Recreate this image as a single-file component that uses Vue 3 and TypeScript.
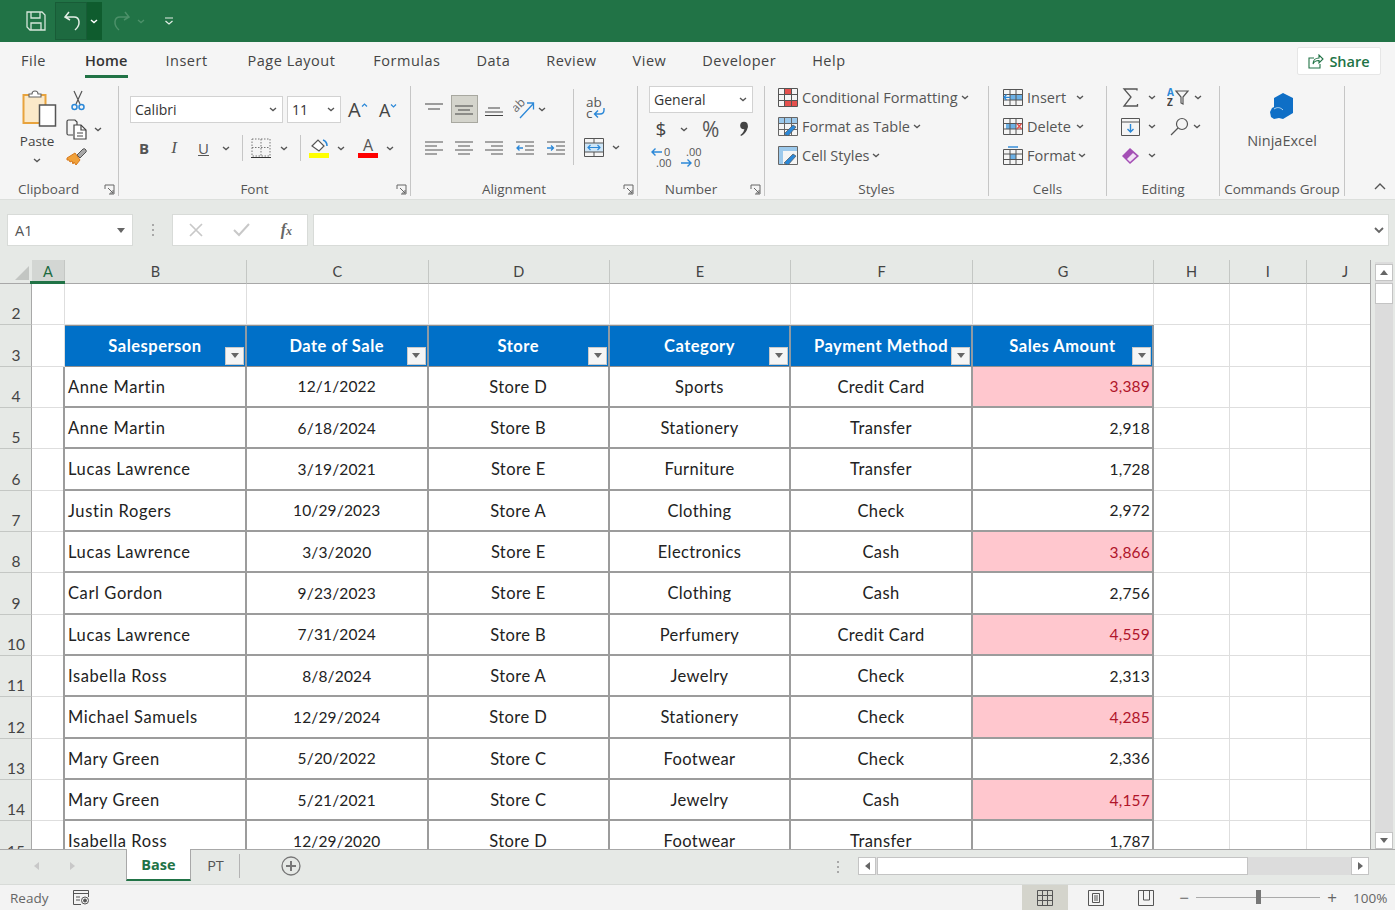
<script setup lang="ts">
import { h } from 'vue'

interface Row { num: number; name: string; date: string; store: string; cat: string; pay: string; amt: string; hot: boolean }

const Chev = () =>
  h('svg', { class: 'chev', viewBox: '0 0 8 5', width: 8, height: 5 }, [
    h('path', { d: 'M1 1l3 2.6L7 1', fill: 'none', stroke: '#555', 'stroke-width': 1.3 })
  ])
const Launcher = () =>
  h('svg', { class: 'launcher', viewBox: '0 0 11 11', width: 11, height: 11 }, [
    h('path', { d: 'M1 5V1h9v9H5M4 4l5 5M9 6v3H6', fill: 'none', stroke: '#666', 'stroke-width': 1 })
  ])

const tabs = ['File', 'Home', 'Insert', 'Page Layout', 'Formulas', 'Data', 'Review', 'View', 'Developer', 'Help']
const columns = [
  { l: 'A', c: 'sel' }, { l: 'B', c: '' }, { l: 'C', c: '' }, { l: 'D', c: '' }, { l: 'E', c: '' },
  { l: 'F', c: '' }, { l: 'G', c: '' }, { l: 'H', c: '' }, { l: 'I', c: '' }, { l: 'J', c: '' }
]
const headers = ['Salesperson', 'Date of Sale', 'Store', 'Category', 'Payment Method', 'Sales Amount']
const rows: Row[] = [
  ['Anne Martin', '12/1/2022', 'Store D', 'Sports', 'Credit Card', '3,389', true],
  ['Anne Martin', '6/18/2024', 'Store B', 'Stationery', 'Transfer', '2,918', false],
  ['Lucas Lawrence', '3/19/2021', 'Store E', 'Furniture', 'Transfer', '1,728', false],
  ['Justin Rogers', '10/29/2023', 'Store A', 'Clothing', 'Check', '2,972', false],
  ['Lucas Lawrence', '3/3/2020', 'Store E', 'Electronics', 'Cash', '3,866', true],
  ['Carl Gordon', '9/23/2023', 'Store E', 'Clothing', 'Cash', '2,756', false],
  ['Lucas Lawrence', '7/31/2024', 'Store B', 'Perfumery', 'Credit Card', '4,559', true],
  ['Isabella Ross', '8/8/2024', 'Store A', 'Jewelry', 'Check', '2,313', false],
  ['Michael Samuels', '12/29/2024', 'Store D', 'Stationery', 'Check', '4,285', true],
  ['Mary Green', '5/20/2022', 'Store C', 'Footwear', 'Check', '2,336', false],
  ['Mary Green', '5/21/2021', 'Store C', 'Jewelry', 'Cash', '4,157', true],
  ['Isabella Ross', '12/29/2020', 'Store D', 'Footwear', 'Transfer', '1,787', false]
].map((r, i) => ({
  num: i + 4, name: r[0] as string, date: r[1] as string, store: r[2] as string, cat: r[3] as string,
  pay: r[4] as string, amt: r[5] as string, hot: r[6] as boolean
}))
</script>

<template>
  <div class="app">
    <header class="titlebar">
      <svg class="qa-save" width="22" height="22" viewBox="0 0 22 22" fill="none" stroke="#d5e6da" stroke-width="1.3">
        <path d="M2 2h15l3 3v15H5l-3-3z" /><path d="M6 2v6h9V2M6 20v-7h10v7" />
      </svg>
      <div class="undo-box">
        <span class="undo-main">
          <svg width="20" height="22" viewBox="0 0 20 22" fill="none" stroke="#e3eee6" stroke-width="1.5">
            <path d="M6 2 2 7l5 3M2 7h9c6 0 7 8 1 13" />
          </svg>
        </span>
        <span class="undo-drop">
          <svg width="8" height="5" viewBox="0 0 8 5"><path d="M1 1l3 2.6L7 1" fill="none" stroke="#fff" stroke-width="1.4" /></svg>
        </span>
      </div>
      <svg class="qa-redo" width="20" height="22" viewBox="0 0 20 22" fill="none" stroke="#4c9069" stroke-width="1.5">
        <path d="M14 2l4 5-5 3M18 7H9c-6 0-7 8-1 13" />
      </svg>
      <svg class="qa-redo-ch" width="8" height="5" viewBox="0 0 8 5"><path d="M1 1l3 2.6L7 1" fill="none" stroke="#4c9069" stroke-width="1.3" /></svg>
      <svg class="qa-more" width="10" height="9" viewBox="0 0 10 9" fill="none" stroke="#e3eee6" stroke-width="1.2">
        <path d="M1 1h8M1.5 4l3.5 3 3.5-3" />
      </svg>
    </header>

    <nav class="tabbar">
      <span v-for="t in tabs" :key="t" class="tab" :class="{ active: t === 'Home', wide: t === 'Page Layout' }">{{ t }}</span>
      <button class="share">
        <svg width="16" height="15" viewBox="0 0 16 15" fill="none" stroke="#217346" stroke-width="1.1">
          <path d="M6 4H1v10h11v-4M5 10c0-4 3-6 6-6V1l4 4-4 4V6.5c-3 0-5 1-6 3.5z" />
        </svg>
        Share
      </button>
    </nav>

    <section class="ribbon">
      <!-- Clipboard -->
      <div class="group g-clip">
        <div class="g-body clip-body">
          <div class="paste">
            <svg class="paste-ic" width="36" height="38" viewBox="0 0 36 38">
              <path d="M1.5 6h22v28h-22z" fill="#fbe9c9" stroke="#e8a33d" stroke-width="2" />
              <path d="M7 8V5h3c0-4 6-4 6 0h3v3z" fill="#fff" stroke="#666" stroke-width="1.1" />
              <path d="M17.5 16h16v21h-16z" fill="#fff" stroke="#555" stroke-width="1.5" />
            </svg>
            <span class="paste-t">Paste</span>
            <Chev />
          </div>
          <div class="clip-col">
            <svg width="14" height="21" viewBox="0 0 14 21" fill="none">
              <path d="M3 1l6 13M11 1 5 14" stroke="#555" stroke-width="1.2" />
              <circle cx="3.5" cy="17" r="2.5" stroke="#2b88d8" stroke-width="1.5" />
              <circle cx="10.5" cy="17" r="2.5" stroke="#2b88d8" stroke-width="1.5" />
            </svg>
            <span class="row-inline">
              <svg width="22" height="21" viewBox="0 0 22 21" fill="none" stroke="#444" stroke-width="1.2">
                <path d="M7 16H2.5Q1 16 1 14.5V2.500Q1 1 2.500 1H9l2 2v3" />
                <path d="M8 6h7l5 5v9H8z" fill="#fff" /><path d="M15 6v5h5M11 14h6M11 17h6" />
              </svg>
              <Chev />
            </span>
            <svg width="21" height="19" viewBox="0 0 21 19">
              <path d="M11 8l6-6q2-1 3 1t-1 3l-5 5z" fill="#a8a8a8" stroke="#555" />
              <path d="M1 11l8-5 5 7-4 5-2-3-1 2-1-3-2 1-1-2-2 0z" fill="#f0a13a" stroke="#d8791a" />
            </svg>
          </div>
        </div>
        <div class="g-label">Clipboard<Launcher /></div>
      </div>

      <!-- Font -->
      <div class="group g-font">
        <div class="g-body col">
          <div class="frow f1">
            <div class="select s-font"><span>Calibri</span><Chev /></div>
            <div class="select s-size"><span>11</span><Chev /></div>
            <span class="grow-a big">A<svg width="7" height="4" viewBox="0 0 7 4"><path d="M1 3.5l2.5-2.5L6 3.5" fill="none" stroke="#2b88d8" stroke-width="1.2" /></svg></span>
            <span class="grow-a small">A<svg width="7" height="4" viewBox="0 0 7 4"><path d="M1 .5l2.5 2.5L6 .5" fill="none" stroke="#2b88d8" stroke-width="1.2" /></svg></span>
          </div>
          <div class="frow f2">
            <span class="fs b">B</span>
            <span class="fs i">I</span>
            <span class="fs u">U</span>
            <span class="fch m4"><Chev /></span>
            <i class="vsep" />
            <span class="fs bd">
              <svg width="20" height="20" viewBox="0 0 20 20" fill="none" stroke="#777" stroke-dasharray="1.5 1.5">
                <path d="M1 1h18v17H1zM10 1v17M1 9.5h18" /><path d="M0 19.5h20" stroke="#333" stroke-dasharray="none" />
              </svg>
            </span>
            <span class="fch m2"><Chev /></span>
            <i class="vsep" />
            <span class="fs fill">
              <svg width="20" height="22" viewBox="0 0 20 22">
                <path d="M3 9l6-6 6 6-5 5z" fill="#fff" stroke="#555" stroke-width="1.2" />
                <path d="M14 3c3 1 4 3 4 6" fill="none" stroke="#2b88d8" stroke-width="1.6" />
                <path d="M0 16h20v5H0z" fill="#ffff00" />
              </svg>
            </span>
            <span class="fch"><Chev /></span>
            <span class="fs color"><b>A</b><i /></span>
            <span class="fch"><Chev /></span>
          </div>
        </div>
        <div class="g-label launch">Font<Launcher /></div>
      </div>

      <!-- Alignment -->
      <div class="group g-align">
        <div class="g-body al-body">
          <div class="al-grid">
            <span class="al"><svg width="18" height="13" viewBox="0 0 18 13" stroke="#444" stroke-width="1.1"><path d="M0 1h18M3 6h12" /></svg></span>
            <span class="al on"><svg width="18" height="13" viewBox="0 0 18 13" stroke="#444" stroke-width="1.1"><path d="M0 3h18M3 7h12M0 11h18" /></svg></span>
            <span class="al"><svg width="18" height="13" viewBox="0 0 18 13" stroke="#444" stroke-width="1.1"><path d="M3 5h12M0 9h18M0 12.5h18" /></svg></span>
            <span class="al orient">
              <svg width="22" height="24" viewBox="0 0 22 24" fill="none">
                <path d="M7 21 20 7M14 6h6.5v6.5" stroke="#2b88d8" stroke-width="1.3" />
                <text x="0" y="0" transform="translate(3 16) rotate(-45)" class="orient-t">ab</text>
              </svg>
              <Chev />
            </span>
          </div>
          <div class="al-grid r2">
            <span class="al"><svg width="18" height="15" viewBox="0 0 18 15" stroke="#555" stroke-width="1.1"><path d="M0 1h18M0 5h12M0 9h18M0 13h12" /></svg></span>
            <span class="al"><svg width="18" height="15" viewBox="0 0 18 15" stroke="#555" stroke-width="1.1"><path d="M0 1h18M3 5h12M0 9h18M3 13h12" /></svg></span>
            <span class="al"><svg width="18" height="15" viewBox="0 0 18 15" stroke="#555" stroke-width="1.1"><path d="M0 1h18M6 5h12M0 9h18M6 13h12" /></svg></span>
            <span class="al nr"><svg width="18" height="15" viewBox="0 0 18 15" fill="none" stroke="#555" stroke-width="1.1"><path d="M0 1h18M9 5h9M9 9h9M0 13h18" /><path d="M7 7H1M3.5 4.5 1 7l2.5 2.5" stroke="#2b88d8" stroke-width="1.3" /></svg></span>
            <span class="al nr"><svg width="18" height="15" viewBox="0 0 18 15" fill="none" stroke="#555" stroke-width="1.1"><path d="M0 1h18M9 5h9M9 9h9M0 13h18" /><path d="M0 7h6M4 4.5 6.5 7 4 9.5" stroke="#2b88d8" stroke-width="1.3" /></svg></span>
          </div>
          <i class="vsep tall" />
          <div class="wrap-col">
            <span class="wrap-ic">
              <span class="abc">ab<br />c</span>
              <svg width="12" height="10" viewBox="0 0 12 10" fill="none" stroke="#2b88d8" stroke-width="1.4"><path d="M11 0v2c0 3-2 4-4 4H2M5 2.5 1.5 6 5 9.5" /></svg>
            </span>
            <span class="merge">
              <svg width="20" height="19" viewBox="0 0 20 19" fill="none">
                <path d="M1 5h18v9H1z" fill="#cfe6f7" />
                <path d="M.5.5h19v18H.5zM.5 5h19M.5 14h19M10 1v4M10 14v4" stroke="#555" />
                <path d="M4 9.5h12M6.5 7 4 9.5 6.5 12M13.5 7 16 9.5 13.5 12" stroke="#2b88d8" stroke-width="1.2" />
              </svg>
              <Chev />
            </span>
          </div>
        </div>
        <div class="g-label launch">Alignment<Launcher /></div>
      </div>

      <!-- Number -->
      <div class="group g-num">
        <div class="g-body col">
          <div class="select s-gen"><span>General</span><Chev /></div>
          <div class="num-r2">
            <span class="dollar">$</span><Chev />
            <span class="pct">%</span>
            <svg class="comma" width="10" height="16" viewBox="0 0 10 16"><circle cx="5" cy="4.5" r="3.8" fill="#444" /><path d="M8.8 4.5C9 9 6 13 2 15l-.6-1C4 12 5.5 9.5 5.5 7z" fill="#444" /></svg>
          </div>
          <div class="num-r3">
            <svg width="26" height="29" viewBox="0 -3 26 29" fill="none">
              <path d="M11 6H1M4.5 2.5 1 6l3.5 3.500" stroke="#2b88d8" stroke-width="1.4" />
              <text x="13" y="10" class="dec">0</text><text x="5" y="21" class="dec">.00</text>
            </svg>
            <svg width="26" height="29" viewBox="0 -3 26 29" fill="none">
              <text x="5" y="10" class="dec">.00</text><text x="13" y="21" class="dec">0</text>
              <path d="M0 17h10M6.5 13.5 10 17l-3.5 3.5" stroke="#2b88d8" stroke-width="1.4" />
            </svg>
          </div>
        </div>
        <div class="g-label launch">Number<Launcher /></div>
      </div>

      <!-- Styles -->
      <div class="group g-styles">
        <div class="g-body stack">
          <div class="cmd">
            <svg width="20" height="19" viewBox="0 0 20 19" fill="none">
              <path d="M.5.5h19v18H.5z" stroke="#555" /><path d="M6 1h8v6H6zM6 12h13v6H6z" fill="#e5504d" />
              <path d="M.5 6.5h19M.5 12.5h19M6.5 1v17M13.5 1v17" stroke="#555" />
            </svg>
            <span>Conditional Formatting</span><Chev />
          </div>
          <div class="cmd">
            <svg width="20" height="19" viewBox="0 0 20 19" fill="none">
              <path d="M1 1h18v5H1z" fill="#9cc9ec" />
              <path d="M.5.5h19v18H.5zM.5 6.5h19M.5 12.5h19M6.5 1v17M13.5 1v17" stroke="#666" />
              <path d="M6 17l9-9 3 2-8 9z" fill="#2b88d8" stroke="#555" stroke-width=".7" />
            </svg>
            <span>Format as Table</span><Chev />
          </div>
          <div class="cmd">
            <svg width="20" height="19" viewBox="0 0 20 19" fill="none">
              <path d="M1 1h18v4H1zM1 5h4v13H1z" fill="#9cc9ec" />
              <path d="M.5.5h19v18H.5z" stroke="#666" />
              <path d="M6 17l9-9 3 2-8 9z" fill="#2b88d8" stroke="#555" stroke-width=".7" />
            </svg>
            <span>Cell Styles</span><Chev />
          </div>
        </div>
        <div class="g-label center">Styles</div>
      </div>

      <!-- Cells -->
      <div class="group g-cells">
        <div class="g-body stack">
          <div class="cmd">
            <svg width="20" height="17" viewBox="0 0 20 17" fill="none">
              <path d="M7 6h12v5H7z" fill="#6cb1e6" />
              <path d="M.5.5h19v16H.5zM.5 5.5h19M.5 11h19M7 1v15M13 1v15" stroke="#555" />
              <path d="M7 8.3H1M3.5 5.5 1 8.3 3.5 11" stroke="#2b88d8" stroke-width="1.3" />
            </svg>
            <span class="c-t">Insert</span><Chev />
          </div>
          <div class="cmd">
            <svg width="20" height="17" viewBox="0 0 20 17" fill="none">
              <path d="M3 6h10v5H3z" fill="#6cb1e6" />
              <path d="M.5.5h19v16H.5zM.5 5.5h19M.5 11h19M7 1v15M13 1v15" stroke="#555" />
              <path d="M14 5.5l4.5 5.5M18.5 5.5 14 11" stroke="#e5504d" stroke-width="1.4" />
            </svg>
            <span class="c-t">Delete</span><Chev />
          </div>
          <div class="cmd">
            <svg width="20" height="19" viewBox="0 0 20 19" fill="none">
              <path d="M7 8h6v5.5H7z" fill="#6cb1e6" />
              <path d="M.5 3.5h19v15H.5zM.5 8h19M.5 13.5h19M7 4v14M13 4v14" stroke="#555" />
              <path d="M5 1h10" stroke="#2b88d8" stroke-width="1.4" />
            </svg>
            <span class="c-t short">Format</span><Chev />
          </div>
        </div>
        <div class="g-label center">Cells</div>
      </div>

      <!-- Editing -->
      <div class="group g-edit">
        <div class="g-body edit-body">
          <div class="erow">
            <svg width="20" height="19" viewBox="0 0 20 19" fill="none" stroke="#555" stroke-width="1.3"><path d="M16 2.5V1H3l7 8-7 9h13.5v-2" /></svg>
            <Chev />
            <svg class="ed-2" width="24" height="27" viewBox="0 -4 24 27" fill="none">
              <text x="0" y="8" class="az a">A</text><text x="0" y="18" class="az">Z</text>
              <path d="M9 3h12l-5 6v7l-2-1V9z" stroke="#555" stroke-width="1.2" />
            </svg>
            <Chev />
          </div>
          <div class="erow">
            <svg width="20" height="18" viewBox="0 0 20 18" fill="none">
              <path d="M.5.5h18v17H.5zM.5 4h18" stroke="#555" />
              <path d="M9.5 6v8M6.5 11l3 3 3-3" stroke="#2b88d8" stroke-width="1.4" />
            </svg>
            <Chev />
            <svg class="ed-2b" width="20" height="19" viewBox="0 0 20 19" fill="none" stroke="#555" stroke-width="1.2">
              <circle cx="12" cy="7" r="5.5" /><path d="M8 11l-7 7" />
            </svg>
            <Chev />
          </div>
          <div class="erow">
            <svg width="20" height="18" viewBox="0 0 20 18">
              <path d="M1 9l8-8 9 8-9 8z" fill="#a44fb5" />
              <path d="M6 12 12 6l3.5 3-6.5 6z" fill="#f2e0f5" />
            </svg>
            <Chev />
          </div>
        </div>
        <div class="g-label center">Editing</div>
      </div>

      <!-- Commands -->
      <div class="group g-cmd">
        <div class="g-body ninja">
          <svg width="24" height="27" viewBox="0 0 24 27">
            <path d="M13 0l10 5v15l-10 6-4-1-5 1-3-2-1-5 2-4 2-1V5z" fill="#0f6fc6" />
            <path d="M4 16c3-2 6-2 9 1" fill="none" stroke="#b7d7f1" stroke-width="1" />
          </svg>
          <span>NinjaExcel</span>
        </div>
        <div class="g-label center">Commands Group</div>
      </div>

      <svg class="collapse" width="12" height="7" viewBox="0 0 12 7"><path d="M1 6l5-5 5 5" fill="none" stroke="#555" stroke-width="1.4" /></svg>
    </section>

    <section class="formula">
      <div class="namebox"><span>A1</span><i class="tri" /></div>
      <span class="dots"><i /><i /><i /></span>
      <div class="fxbox">
        <svg width="14" height="14" viewBox="0 0 14 14"><path d="M1 1l12 12M13 1 1 13" stroke="#c8c8c8" stroke-width="1.7" /></svg>
        <svg width="17" height="14" viewBox="0 0 17 14"><path d="M1 7l5 5L16 1" fill="none" stroke="#c8c8c8" stroke-width="2" /></svg>
        <span class="fx">f<small>x</small></span>
      </div>
      <div class="fbar">
        <svg width="10" height="7" viewBox="0 0 10 7"><path d="M1 1l4 4 4-4" fill="none" stroke="#666" stroke-width="1.8" /></svg>
      </div>
    </section>

    <section class="sheet">
      <div class="gridwrap">
        <div class="grid">
          <div class="ch corner"><i /></div>
          <div v-for="c in columns" :key="c.l" class="ch" :class="c.c">{{ c.l }}</div>

          <div class="rh">2</div>
          <div v-for="c in columns" :key="'r2' + c.l" class="gc" />

          <div class="rh">3</div>
          <div class="gc" />
          <div v-for="hd in headers" :key="hd" class="th">
            <span>{{ hd }}</span>
            <button class="filter"><i /></button>
          </div>
          <div class="gc" /><div class="gc" /><div class="gc" />

          <template v-for="r in rows" :key="r.num">
            <div class="rh">{{ r.num }}</div>
            <div class="gc" />
            <div class="td left">{{ r.name }}</div>
            <div class="td date">{{ r.date }}</div>
            <div class="td">{{ r.store }}</div>
            <div class="td">{{ r.cat }}</div>
            <div class="td">{{ r.pay }}</div>
            <div class="td right" :class="{ hot: r.hot }">{{ r.amt }}</div>
            <div class="gc" /><div class="gc" /><div class="gc" />
          </template>
        </div>
      </div>
      <div class="vscroll">
        <span class="sbtn"><i class="up" /></span>
        <span class="vthumb" />
        <span class="vtrack" />
        <span class="sbtn"><i class="down" /></span>
      </div>
    </section>

    <section class="sheettabs">
      <span class="nav"><i class="l" /></span>
      <span class="nav"><i class="r" /></span>
      <span class="stab active">Base</span>
      <span class="stab">PT</span>
      <svg class="plus" width="20" height="20" viewBox="0 0 20 20" fill="none" stroke="#777"><circle cx="10" cy="10" r="9" stroke-width="1.3" /><path d="M5 10h10M10 5v10" stroke-width="2" /></svg>
      <span class="dots2"><i /><i /><i /></span>
      <div class="hscroll">
        <span class="hbtn"><i class="l" /></span>
        <span class="hthumb" />
        <span class="htrack" />
        <span class="hbtn"><i class="r" /></span>
      </div>
    </section>

    <footer class="status">
      <span class="ready">Ready</span>
      <svg class="macro" width="19" height="17" viewBox="0 0 19 17" fill="none" stroke="#555">
        <path d="M9 15.5H1.5v-14h15V8M1.5 4.5h15M4 8h4M4 11h4" /><circle cx="13" cy="11.5" r="3.5" /><circle cx="13" cy="11.5" r="1.5" fill="#555" />
      </svg>
      <span class="views">
        <span class="view on">
          <svg width="16" height="16" viewBox="0 0 16 16" fill="none" stroke="#555"><path d="M.5.5h15v15H.5zM.5 5.5h15M.5 10.5h15M5.5 1v15M10.5 1v15" /></svg>
        </span>
        <span class="view v2">
          <svg width="16" height="16" viewBox="0 0 16 16" fill="none" stroke="#555"><path d="M.5.5h15v15H.5zM4.5 3.5h7v9h-7zM6 6h4M6 8h4M6 10h4" /></svg>
        </span>
        <span class="view v3">
          <svg width="16" height="16" viewBox="0 0 16 16" fill="none" stroke="#555"><path d="M.5.5h15v15H.5zM5.5 1v9h6V1" /></svg>
        </span>
      </span>
      <span class="zm">−</span>
      <span class="slider"><i /></span>
      <span class="zm plus-z">+</span>
      <span class="pctz">100%</span>
    </footer>
  </div>
</template>

<style>
html, body { margin: 0; background: #e6e9e6; }
</style>

<style scoped>
.app {
  width: 1395px; height: 910px; overflow: hidden; display: flex; flex-direction: column;
  font-family: "Open Sans", "Noto Sans", sans-serif; color: #444; background: #e6e9e6;
}
svg { flex: none; display: block; }
.titlebar { height: 42px; background: #217346; display: flex; align-items: center; padding-left: 25px; flex: none; }
.undo-box { display: flex; height: 38px; margin-left: 8px; }
.undo-main { width: 32px; background: #1d6a40; border: 1px solid #185c37; box-sizing: border-box; display: flex; align-items: center; justify-content: center; padding-left: 3px; }
.undo-drop { width: 15px; background: #0f5c2e; display: flex; align-items: center; justify-content: center; padding-right: 2px; box-sizing: border-box; }
.qa-redo { margin-left: 9px; }
.qa-redo-ch { margin-left: 6px; }
.qa-more { margin-left: 19px; }

.tabbar { height: 38px; background: #f5f5f5; display: flex; align-items: center; padding-left: 21px; flex: none; position: relative; gap: 36px; font-size: 14.5px; letter-spacing: .5px; }
.tab { line-height: 38px; height: 38px; position: relative; color: #444; white-space: nowrap; }
.tab:first-child { margin-right: 3px; }
.tab.active { color: #333; font-weight: 600; letter-spacing: .15px; margin-right: -2px; }
.tab.wide { margin-left: 4px; margin-right: 2px; }
.tab.active { margin-right: 2px; }
.tab.active::after { content: ""; position: absolute; left: 0; right: 0; bottom: 2px; height: 3px; background: #217346; }
.share { margin-left: auto; margin-right: 14px; width: 84px; height: 28px; background: #fff; border: 1px solid #e6e6e6; border-radius: 2px; color: #217346; font: 600 14.5px "Open Sans", sans-serif; letter-spacing: 0; display: flex; align-items: center; justify-content: center; gap: 5px; padding: 0; }

.ribbon { height: 120px; background: #f5f5f5; display: flex; flex: none; position: relative; border-bottom: 1px solid #dcdfdc; box-sizing: border-box; padding-top: 6px; }
.group { display: flex; flex-direction: column; border-right: 1px solid #c6c6c6; box-sizing: border-box; height: 110px; flex: none; }
.g-body { flex: 1; min-height: 0; }
.g-label { height: 13px; font-size: 13.5px; line-height: 13px; color: #555; display: flex; align-items: center; justify-content: center; position: relative; white-space: nowrap; }
.g-label.launch { padding-right: 20px; }
.launcher { position: absolute; right: 3px; top: 1px; }
.chev { flex: none; }
.col { display: flex; flex-direction: column; }

.g-clip { width: 119px; }
.g-font { width: 292px; }
.g-align { width: 227px; }
.g-num { width: 127px; }
.g-styles { width: 224px; }
.g-cells { width: 118px; }
.g-edit { width: 113px; }
.g-cmd { width: 125px; }
.g-clip .g-label { justify-content: flex-start; padding-left: 18px; }

.clip-body { display: flex; padding-left: 18px; }
.paste { width: 38px; display: flex; flex-direction: column; align-items: center; padding-top: 3px; }
.paste-ic { margin-left: 5px; }
.paste-t { font-size: 13.5px; line-height: 18px; margin-top: 5px; margin-bottom: 8px; }
.clip-col { margin-left: 9px; display: flex; flex-direction: column; align-items: flex-start; padding-top: 4px; gap: 8px; }
.clip-col > svg:first-child { margin-left: 6px; }
.row-inline { display: flex; align-items: center; gap: 6px; margin-left: 1px; }
.clip-col > svg:last-child { margin-left: 1px; margin-top: -1px; }

.g-font .g-body { padding-left: 11px; }
.frow { display: flex; align-items: center; }
.f1 { height: 27px; margin-top: 10px; }
.f2 { margin-top: 11px; height: 28px; }
.select { background: #fff; border: 1px solid #d2d2d2; box-sizing: border-box; display: flex; align-items: center; justify-content: space-between; padding: 0 5px 0 4px; height: 27px; font-size: 14px; color: #333; }
.s-font { width: 153px; }
.s-size { width: 54px; margin-left: 4px; }
.grow-a { display: flex; align-items: flex-start; color: #444; line-height: 1; }
.grow-a.big { font-size: 20px; margin-left: 7px; width: 31px; }
.grow-a.small { font-size: 18px; width: 24px; }
.grow-a svg { margin-top: 3px; }
.fs { width: 30px; display: flex; justify-content: center; align-items: center; font-size: 15px; color: #555; flex: none; }
.fs.b { font-weight: 700; margin-left: -1px; }
.fs.i { font-style: italic; font-family: "Liberation Serif", serif; font-size: 17px; }
.fs.u { text-decoration: underline; width: 29px; }
.fch { width: 16px; display: flex; justify-content: flex-start; align-items: center; flex: none; margin-left: 1px; }
.fch.m4 { margin-left: 4px; }
.fch.m2 { margin-left: 2px; }
.vsep { display: block; width: 1px; height: 26px; background: #c6c6c6; flex: none; }
.f2 .vsep { margin-left: 4px; margin-right: 3px; }
.f2 .fs.bd, .f2 .fs.fill { width: 30px; margin-right: 2px; }
.fs.color { flex-direction: column; font-size: 16px; font-weight: 400; line-height: 15px; margin-right: 2px; }
.fs.color b { font-weight: 400; }
.fs.color i { display: block; width: 20px; height: 5px; background: #f00; }

.al-body { display: flex; flex-wrap: wrap; padding-left: 8px; position: relative; align-items: flex-start; }
.al-grid { display: flex; width: 155px; height: 30px; margin-top: 8px; align-items: center; }
.al-grid.r2 { position: absolute; left: 8px; top: 47px; margin: 0; }
.al { width: 30px; height: 28px; display: flex; align-items: center; justify-content: center; box-sizing: border-box; flex: none; }
.al.on { background: #d4d4cc; border: 1px solid #a8a8a0; width: 27px; margin: 0 1.5px; }
.al.nr { width: 31px; }
.al.orient { width: 50px; gap: 3px; justify-content: flex-start; padding-left: 4px; }
.orient-t { font: 12px "Open Sans", sans-serif; fill: #666; stroke: none; }
.vsep.tall { height: 76px; margin: 3px 0 0 -1px; }
.wrap-col { margin-left: 3px; width: 50px; display: flex; flex-direction: column; padding-left: 7px; }
.wrap-ic { position: relative; display: block; width: 26px; height: 30px; margin-top: 8px; font-size: 13.5px; line-height: 11px; color: #555; }
.abc { display: block; padding-top: 3px; padding-left: 2px; }
.wrap-ic svg { position: absolute; left: 9px; top: 14px; }
.merge { display: flex; align-items: center; gap: 8px; margin-top: 14px; }

.g-num .g-body { padding-left: 11px; }
.s-gen { width: 104px; height: 27px; }
.num-r2 { display: flex; align-items: center; height: 32px; }
.dollar { font-size: 19px; width: 24px; text-align: center; color: #444; }
.num-r2 .chev { margin-left: 7px; }
.pct { font-size: 21px; margin-left: 14px; width: 24px; color: #555; }
.comma { margin-left: 13px; }
.num-r3 { display: flex; gap: 4px; padding-left: 2px; margin-top: -2px; }
.dec { font: 11px "Open Sans", sans-serif; fill: #555; stroke: none; }

.stack { display: flex; flex-direction: column; margin-top: -3px; }
.cmd { height: 29px; display: flex; align-items: center; font-size: 14.5px; white-space: nowrap; color: #555; flex: none; }
.g-styles .cmd { padding-left: 13px; }
.g-styles .cmd span { margin-left: 4px; margin-right: 3px; }
.g-cells .cmd { padding-left: 14px; }
.c-t { margin-left: 4px; width: 49px; }
.c-t.short { width: 51px; }
.g-label.center { justify-content: center; }

.edit-body { padding-left: 14px; display: flex; flex-direction: column; margin-top: -3px; }
.erow { display: flex; align-items: center; height: 29px; flex: none; }
.erow .chev { margin-left: 7px; }
.erow .chev ~ .chev { margin-left: 3px; }
.ed-2 { margin-left: 11px; }
.ed-2b { margin-left: 14px; }
.az { font: 700 10px "Open Sans", sans-serif; fill: #444; }
.az.a { fill: #2b88d8; }

.ninja { display: flex; flex-direction: column; align-items: center; padding-top: 7px; font-size: 14.5px; color: #555; gap: 11px; }
.collapse { position: absolute; right: 9px; top: 103px; }

.formula { height: 60px; flex: none; display: flex; align-items: center; padding: 0 6px 0 7px; box-sizing: border-box; }
.namebox { width: 126px; height: 32px; background: #fff; border: 1px solid #d8dbd8; box-sizing: border-box; display: flex; align-items: center; justify-content: space-between; padding: 0 7px; font-size: 14.5px; color: #555; }
.tri { width: 0; height: 0; border: 4.5px solid transparent; border-top: 5px solid #666; border-bottom: 0; }
.dots { width: 39px; display: flex; flex-direction: column; align-items: center; gap: 3px; }
.dots i, .dots2 i { display: block; width: 2px; height: 2px; background: #a8a8a8; }
.fxbox { width: 136px; height: 32px; background: #fff; border: 1px solid #d8dbd8; box-sizing: border-box; display: flex; align-items: center; justify-content: space-between; padding: 0 15px 0 16px; }
.fx { font: italic 700 16px "Liberation Serif", serif; color: #666; }
.fx small { font-size: 12px; }
.fbar { flex: 1; margin-left: 5px; height: 32px; background: #fff; border: 1px solid #d8dbd8; box-sizing: border-box; display: flex; align-items: center; justify-content: flex-end; padding-right: 4px; }

.sheet { height: 589px; flex: none; display: flex; }
.gridwrap { width: 1370px; overflow: hidden; flex: none; border-right: 1px solid #a8a8a8; }
.grid { display: grid; grid-template-columns: 32px 33px 182px 181.5px 181.5px 181px 182px 181px 76px 76.5px 78px; grid-template-rows: 24px repeat(14, 41.34px); font-family: Lato, "Open Sans", sans-serif; font-size: 16.5px; letter-spacing: .4px; color: #222; }
.ch { display: flex; align-items: center; justify-content: center; font-size: 14.5px; letter-spacing: 0; color: #444; border-right: 1px solid #c4c7c4; border-bottom: 1px solid #a8a8a8; box-sizing: border-box; background: #e6e9e6; position: relative; }
.ch.corner { border-right: 0; }
.ch.corner i { position: absolute; right: 3px; bottom: 3px; border-style: solid; border-width: 0 0 14px 14px; border-color: transparent transparent #c3c6c3 transparent; }
.ch.sel { background: #d3d6d3; color: #1c6b3f; }
.ch.sel::after { content: ""; position: absolute; left: -2px; right: -2px; bottom: -1px; height: 3px; background: #217346; }
.rh { background: #e6e9e6; border-bottom: 1px solid #c4c7c4; border-right: 1px solid #a8a8a8; box-sizing: border-box; display: flex; align-items: flex-end; justify-content: center; font-size: 15.5px; letter-spacing: 0; color: #444; line-height: 18px; padding: 0 0 2px 1px; }
.gc { background: #fff; border-right: 1px solid #dedede; border-bottom: 1px solid #dedede; box-sizing: border-box; }
.th { background: #0070c8; color: #fff; font-weight: 700; font-size: 16.5px; letter-spacing: .5px; display: flex; align-items: center; justify-content: center; position: relative; border-right: 2px solid #8f9aa3; border-top: 1px solid #8f8f8f; border-bottom: 1px solid #8f8f8f; box-sizing: border-box; white-space: nowrap; }
.filter { position: absolute; right: 1px; bottom: 1px; width: 19px; height: 18px; padding: 0; background: #f5f5f5; border: 1px solid #c9c9c9; box-sizing: border-box; display: flex; align-items: center; justify-content: center; }
.filter i { width: 0; height: 0; border: 4.5px solid transparent; border-top: 5px solid #666; border-bottom: 0; }
.td { background: #fff; display: flex; align-items: center; justify-content: center; border-right: 2px solid #9c9c9c; border-bottom: 2px solid #9c9c9c; box-sizing: border-box; white-space: nowrap; padding-top: 1px; }
.td.left { justify-content: flex-start; padding-left: 3px; border-left: 2px solid #9c9c9c; margin-left: -2px; letter-spacing: .6px; }
.td.date { font-size: 15.5px; letter-spacing: .15px; padding-top: 0; }
.td.right { justify-content: flex-end; padding-right: 2px; font-size: 15.5px; letter-spacing: .2px; padding-top: 0; }
.td.hot { background: #ffc7ce; color: #b0152a; }
.vscroll { width: 18px; margin-left: 4px; display: flex; flex-direction: column; padding-top: 2px; height: 587px; background: #dcdcdc; align-self: flex-end; box-sizing: border-box; }
.sbtn { height: 17px; background: #fff; border: 1px solid #c4c4c4; box-sizing: border-box; display: flex; align-items: center; justify-content: center; flex: none; }
.sbtn i { width: 0; height: 0; border: 4px solid transparent; }
.sbtn .up { border-bottom: 5px solid #666; border-top: 0; }
.sbtn .down { border-top: 5px solid #666; border-bottom: 0; }
.vthumb { height: 21px; background: #fff; border: 1px solid #c4c4c4; box-sizing: border-box; margin-top: 2px; flex: none; }
.vtrack { flex: 1; }

.sheettabs { height: 35px; flex: none; display: flex; align-items: flex-start; border-top: 1px solid #a8a8a8; box-sizing: border-box; position: relative; padding-left: 34px; }
.nav { width: 36px; height: 31px; display: flex; align-items: center; }
.nav i { width: 0; height: 0; border: 4px solid transparent; }
.nav i.l { border-right: 5px solid #c8c8c8; border-left: 0; }
.nav i.r { border-left: 5px solid #c8c8c8; border-right: 0; }
.stab { height: 31px; display: flex; align-items: center; justify-content: center; font-size: 14.5px; color: #555; box-sizing: border-box; }
.stab.active { width: 65px; margin-left: 20px; margin-top: -1px; height: 32px; background: #fff; color: #217346; font-weight: 700; border-bottom: 2px solid #217346; border-left: 1px solid #a8a8a8; border-right: 1px solid #a8a8a8; }
.stab:not(.active) { width: 49px; position: relative; }
.stab:not(.active)::after { content: ""; position: absolute; right: 0; top: 4px; height: 24px; width: 1px; background: #b4b4b4; }
.plus { margin-left: 41px; margin-top: 6px; }
.dots2 { position: absolute; left: 837px; top: 11px; display: flex; flex-direction: column; gap: 3px; }
.hscroll { margin-left: auto; margin-right: 26px; margin-top: 7px; width: 511px; height: 18px; display: flex; background: #dcdcdc; }
.hbtn { width: 18px; background: #fff; border: 1px solid #c4c4c4; box-sizing: border-box; display: flex; align-items: center; justify-content: center; flex: none; }
.hbtn i { width: 0; height: 0; border: 4px solid transparent; }
.hbtn i.l { border-right: 5px solid #666; border-left: 0; }
.hbtn i.r { border-left: 5px solid #666; border-right: 0; }
.hthumb { width: 371px; background: #fff; border: 1px solid #c4c4c4; box-sizing: border-box; margin-left: 1px; flex: none; }
.htrack { flex: 1; }

.status { height: 26px; flex: none; background: #f3f3f3; border-top: 1px solid #d8dbd8; box-sizing: border-box; display: flex; align-items: center; font-size: 13.5px; color: #666; padding-left: 10px; position: relative; }
.ready { width: 62px; }
.views { margin-left: auto; display: flex; height: 100%; margin-right: 9px; }
.view { display: flex; align-items: center; justify-content: center; }
.view.on { width: 46px; background: #d4d4cc; }
.view.v2 { width: 56px; }
.view.v3 { width: 44px; }
.zm { width: 14px; text-align: center; font-size: 17px; color: #666; }
.slider { width: 124px; height: 1px; background: #aaa; margin: 0 5px; position: relative; }
.slider i { position: absolute; left: 60px; top: -7px; width: 5px; height: 14px; background: #777; }
.plus-z { margin-right: 14px; }
.pctz { width: 36px; margin-right: 6px; white-space: nowrap; }
</style>
